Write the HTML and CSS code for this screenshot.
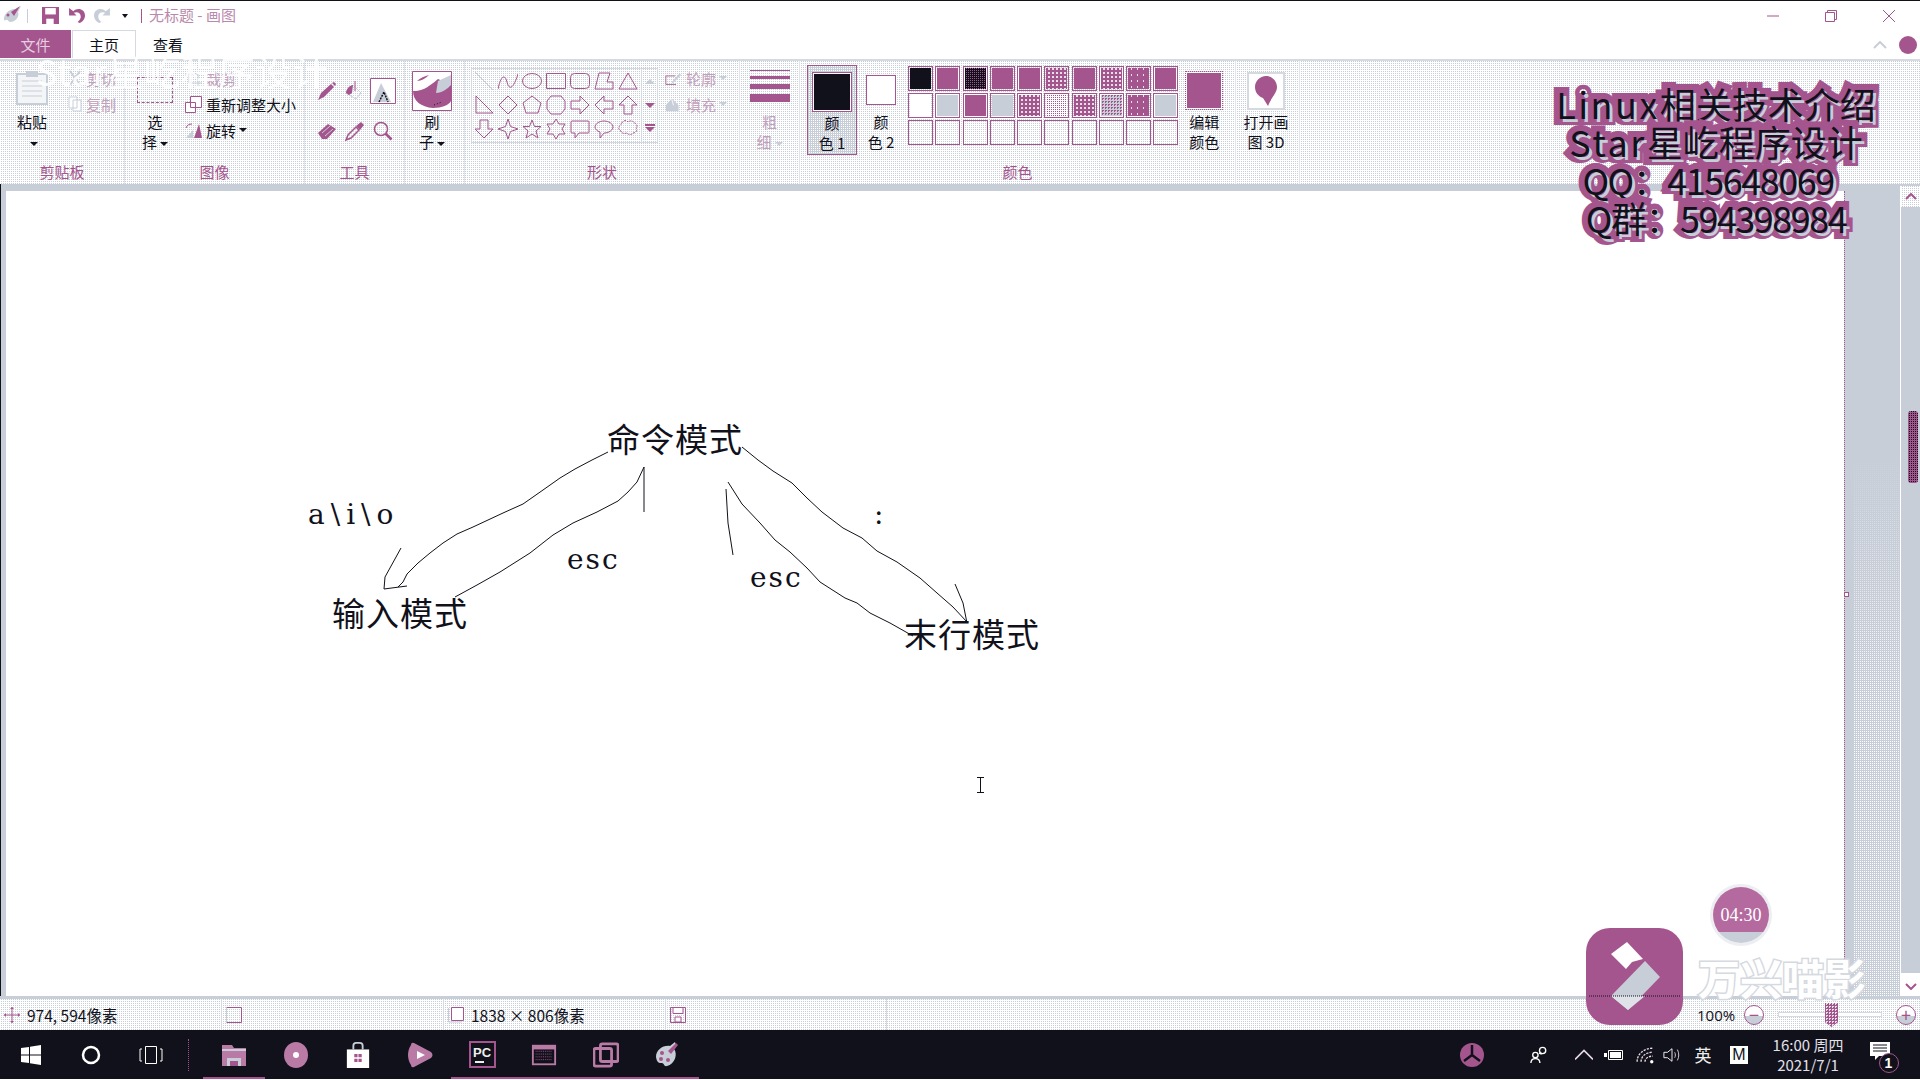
FILE: index.html
```html
<!DOCTYPE html>
<html lang="zh">
<head>
    <meta charset="UTF-8">
    <title>无标题 - 画图</title>
    <link rel="stylesheet" href="styles.css">
</head>
<body>
<div class="app">

    <div class="titlebar">
        <svg class="ti" viewBox="0 0 20 20"><path d="M2 14C1 8 8 2 14 3l5-3-3 6c2 5-3 10-8 10-2 0-2-3-4-2-1 0-1 1-2 0z" fill="#c8ced8"/><path d="M9 6l9-6-6 10z" fill="#a5558e"/><circle cx="6" cy="9" r="1.5" fill="#a5558e"/></svg>
        <span class="qa-sep"></span>
        <svg class="ti save" viewBox="0 0 16 16"><path d="M0 0h16v16H0z" fill="#a5558e"/><path d="M3 1h10v6H3z" fill="#fff"/><path d="M4 11h7v5H4z" fill="#fff"/></svg>
        <svg class="ti" viewBox="0 0 16 16"><path d="M1 1v7h7L5.5 5.5C8 4 12 5 12 9c0 2-1 4-3 5l2 1c3-1 5-4 5-7 0-6-7-8-11-4z" fill="#a5558e"/></svg>
        <svg class="ti" viewBox="0 0 16 16"><path d="M15 1v7H8l2.5-2.500C8 4 4 5 4 9c0 2 1 4 3 5l-2 1C2 14 0 11 0 8c0-6 7-8 11-4z" fill="#c8ced8"/></svg>
        <span class="qa-caret"></span>
        <span class="qa-sep second"></span>
        <span class="doc-title">无标题 - 画图</span>
        <div class="win-buttons">
            <svg viewBox="0 0 14 14"><path d="M1 7h12" stroke="#a5558e" fill="none"/></svg>
            <svg viewBox="0 0 14 14"><path d="M1.5 3.5h9v9h-9zM3.5 3.5v-2h9v9h-2" stroke="#a5558e" fill="none"/></svg>
            <svg viewBox="0 0 14 14"><path d="M1 1l12 12M13 1L1 13" stroke="#a5558e" fill="none"/></svg>
        </div>
    </div>

    <div class="tabs">
        <div class="tab tab-file">文件</div>
        <div class="tab tab-on">主页</div>
        <div class="tab">查看</div>
        <div class="tabs-right">
            <svg class="chev" viewBox="0 0 14 8"><path d="M1 7l6-6 6 6" stroke="#c8ced8" stroke-width="2" fill="none"/></svg>
            <span class="help"></span>
        </div>
    </div>

    <div class="ribbon">
        <div class="group g-clip">
            <div class="group-body">
                <div class="bigcol col-paste">
                    <div class="slot">
                        <svg width="32" height="34" viewBox="0 0 32 34"><path d="M1 3h30v30H1z" fill="#f4f5f7" stroke="#c8ced8" stroke-width="2"/><path d="M10 0h12v6H10z" fill="#c8ced8"/><path d="M6 10h20M6 15h20M6 20h20M6 25h20" stroke="#c8ced8"/></svg>
                    </div>
                    <div class="cap">粘贴</div>
                    <div class="cap"><span class="caret"></span></div>
                </div>
                <div class="smallcol">
                    <div class="row off"><svg class="si" viewBox="0 0 14 16"><path d="M2 1l10 14M12 1L2 15" stroke="#c8ced8" stroke-width="2" fill="none"/></svg>剪切</div>
                    <div class="row off"><svg class="si" viewBox="0 0 14 16"><path d="M1 1h8v11H1zM5 4h8v11H5z" stroke="#c8ced8" fill="#fff"/></svg>复制</div>
                </div>
            </div>
            <div class="group-label">剪贴板</div>
        </div>

        <div class="group g-image">
            <div class="group-body">
                <div class="bigcol col-select">
                    <div class="slot"><span class="dash-box"></span></div>
                    <div class="cap">选</div>
                    <div class="cap">择<span class="caret"></span></div>
                </div>
                <div class="smallcol">
                    <div class="row off"><svg class="si wide" viewBox="0 0 17 17"><path d="M4 0v13h13M0 4h13v13" stroke="#c8ced8" fill="none"/></svg>裁剪</div>
                    <div class="row"><svg class="si wide" viewBox="0 0 17 17"><path d="M5.5.5h11v11h-11zM.5 6.5h10v10H.5z" stroke="#a5558e" fill="#fff"/></svg>重新调整大小</div>
                    <div class="row"><svg class="si wide" viewBox="0 0 17 17"><path d="M1 16L8 8v8z" fill="#c8ced8"/><path d="M9 16l5-14 3 14z" fill="#a5558e"/><path d="M1 6c1-3 3-4 6-4" stroke="#a5558e" fill="none"/></svg>旋转<span class="caret"></span></div>
                </div>
            </div>
            <div class="group-label">图像</div>
        </div>

        <div class="group g-tools">
            <div class="group-body">
                <div class="tool-grid">
                    <svg viewBox="0 0 20 20"><path d="M1 19l3-7L14 3l3 3-10 10z" fill="#a5558e"/><path d="M15 2l2-1 2 2-1 2z" fill="#a5558e"/></svg>
                    <svg viewBox="0 0 20 20"><path d="M1 12l7-8 8 8-5 6z" fill="none" stroke="#c8ced8"/><path d="M1 12c0-4 4-8 7-8l-1 8-3 2z" fill="#a5558e"/><path d="M10 0v10" stroke="#a5558e"/></svg>
                    <svg viewBox="0 0 26 26"><path d="M.5.5h25v25H.5z" fill="#fff" stroke="#a5558e"/><path d="M3 24L11 5l10 19z" fill="#c8ced8"/><path d="M9 24l5-10 4 10" fill="none" stroke="#10111a" stroke-width="1.5" stroke-dasharray="2 1"/></svg>
                    <svg viewBox="0 0 20 20"><path d="M1 12L11 3l8 5-9 10H5z" fill="#a5558e"/><path d="M5 12l8-7M8 15l8-7" stroke="#c8ced8"/></svg>
                    <svg viewBox="0 0 20 20"><path d="M1 19l2-5 8-8 3 3-8 8z" fill="none" stroke="#a5558e" stroke-width="1.5"/><path d="M11 5l5-4 3 3-4 5z" fill="#a5558e"/></svg>
                    <svg viewBox="0 0 20 20"><circle cx="8" cy="8" r="6.5" fill="none" stroke="#a5558e" stroke-width="1.5"/><path d="M12.5 12.5l6 6" stroke="#a5558e" stroke-width="2.5"/></svg>
                </div>
            </div>
            <div class="group-label">工具</div>
        </div>

        <div class="group g-brush">
            <div class="group-body">
                <div class="bigcol col-brush">
                    <div class="slot">
                        <svg width="40" height="40" viewBox="0 0 40 40"><path d="M.5.5h39v39H.5z" fill="#fff" stroke="#a5558e"/><path d="M1 20c0 10 8 16 20 17 9 0 16-3 18-7V14L26 8C14 18 10 20 1 20z" fill="#a5558e"/><path d="M24 22c6 0 11-4 15-8V4L26 10z" fill="#c8ced8"/><path d="M5 10c3-3 8-5 12-6-3 3-8 6-12 6z" fill="#a5558e"/><path d="M22 34l8-3" stroke="#10111a" stroke-dasharray="1 2"/></svg>
                    </div>
                    <div class="cap">刷</div>
                    <div class="cap">子<span class="caret"></span></div>
                </div>
            </div>
            <div class="group-label">&nbsp;</div>
        </div>

        <div class="group g-shapes">
            <div class="group-body">
                <div class="gallery">
                    <svg viewBox="0 0 20 20"><path d="M1 1l18 18" stroke="#c8ced8"/></svg>
                    <svg viewBox="0 0 20 20"><path d="M0 18C3 4 7 3 9 11s6 8 11-8"/></svg>
                    <svg viewBox="0 0 20 20"><ellipse cx="10" cy="10" rx="9.5" ry="7.5"/></svg>
                    <svg viewBox="0 0 20 20"><path d="M.5 2.5h19v15H.5z"/></svg>
                    <svg viewBox="0 0 20 20"><rect x=".5" y="2.5" width="19" height="15" rx="4"/></svg>
                    <svg viewBox="0 0 20 20"><path d="M1 18L5 2h11l-3 9h6v7z"/></svg>
                    <svg viewBox="0 0 20 20"><path d="M10 2l9 16H1z"/></svg>
                    <svg viewBox="0 0 20 20"><path d="M2 1v17h17z"/></svg>
                    <svg viewBox="0 0 20 20"><path d="M10 1l9 9-9 9-9-9z"/></svg>
                    <svg viewBox="0 0 20 20"><path d="M10 1l9 7-3 10H4L1 8z"/></svg>
                    <svg viewBox="0 0 20 20"><path d="M5 1h10l4 5v8l-4 5H5l-4-5V6z"/></svg>
                    <svg viewBox="0 0 20 20"><path d="M1 6h9V1l9 9-9 9v-5H1z"/></svg>
                    <svg viewBox="0 0 20 20"><path d="M19 6h-9V1l-9 9 9 9v-5h9z"/></svg>
                    <svg viewBox="0 0 20 20"><path d="M6 19v-9H1l9-9 9 9h-5v9z"/></svg>
                    <svg viewBox="0 0 20 20"><path d="M6 1v9H1l9 9 9-9h-5V1z"/></svg>
                    <svg viewBox="0 0 20 20"><path d="M10 0l2.500 7.500L20 10l-7.500 2.500L10 20l-2.500-7.500L0 10l7.500-2.500z"/></svg>
                    <svg viewBox="0 0 20 20"><path d="M10 1l2.500 6.500H19l-5 4.500 2 7-6-4-6 4 2-7-5-4.500h6.500z"/></svg>
                    <svg viewBox="0 0 20 20"><path d="M10 0l3 5h6l-3 5 3 5h-6l-3 5-3-5H1l3-5-3-5h6z"/></svg>
                    <svg viewBox="0 0 20 20"><path d="M2 2h16q1 0 1 1v10q0 1-1 1H9l-4 5v-5H2q-1 0-1-1V3q0-1 1-1z"/></svg>
                    <svg viewBox="0 0 20 20"><path d="M10 2c5 0 9 3 9 6s-4 6-9 6l-4 5v-6c-3-1-5-3-5-5 0-3 4-6 9-6z"/></svg>
                    <svg viewBox="0 0 20 20"><path d="M4 4c1-3 5-3 6-1 2-2 6-1 6 1 3 0 4 4 2 5 2 2 0 5-3 5-1 2-5 2-6 0-3 1-6 0-6-2-3-1-3-5 0-6 0-1 0-2 1-2z" stroke-dasharray="2 1"/></svg>
                </div>
                <div class="gallery-scroll">
                    <span class="tri off-tri"></span>
                    <span class="tri"></span>
                    <span class="tri more"></span>
                </div>
                <div class="smallcol shape-opts">
                    <div class="row off"><svg class="si wide" viewBox="0 0 20 16"><path d="M1 5h11M1 5v10h12" stroke="#a5558e" fill="none"/><path d="M8 12l9-10 2 2-10 10z" fill="#c8ced8"/></svg>轮廓<span class="caret pale"></span></div>
                    <div class="row off"><svg class="si wide" viewBox="0 0 20 16"><path d="M1 16V9l7-8 8 8v7z" fill="#c8ced8"/><path d="M8 2l2 7" stroke="#fff"/></svg>填充<span class="caret pale"></span></div>
                </div>
            </div>
            <div class="group-label">形状</div>
        </div>

        <div class="group g-size">
            <div class="group-body">
                <div class="bigcol col-size">
                    <div class="slot lines">
                        <span class="ln l1"></span><span class="ln l2"></span><span class="ln l3"></span><span class="ln l4"></span>
                    </div>
                    <div class="cap off">粗</div>
                    <div class="cap off">细<span class="caret pale"></span></div>
                </div>
            </div>
            <div class="group-label">&nbsp;</div>
        </div>

        <div class="group g-colors">
            <div class="group-body">
                <div class="bigcol color-one">
                    <div class="slot"><span class="big-swatch black"></span></div>
                    <div class="cap">颜</div>
                    <div class="cap">色 1</div>
                </div>
                <div class="bigcol color-two">
                    <div class="slot"><span class="big-swatch white"></span></div>
                    <div class="cap">颜</div>
                    <div class="cap">色 2</div>
                </div>
                <div class="palette">
                    <span class="sw"><i class="black"></i></span>
                    <span class="sw"><i class="mag"></i></span>
                    <span class="sw"><i class="dark-dots"></i></span>
                    <span class="sw"><i class="mag"></i></span>
                    <span class="sw"><i class="mag"></i></span>
                    <span class="sw"><i class="dots"></i></span>
                    <span class="sw"><i class="mag"></i></span>
                    <span class="sw"><i class="dots"></i></span>
                    <span class="sw"><i class="sparse"></i></span>
                    <span class="sw"><i class="mag"></i></span>

                    <span class="sw"><i class="white"></i></span>
                    <span class="sw"><i class="grey"></i></span>
                    <span class="sw"><i class="mag"></i></span>
                    <span class="sw"><i class="grey"></i></span>
                    <span class="sw"><i class="dots"></i></span>
                    <span class="sw"><i class="light-dots"></i></span>
                    <span class="sw"><i class="dots"></i></span>
                    <span class="sw"><i class="grey-dots"></i></span>
                    <span class="sw"><i class="sparse"></i></span>
                    <span class="sw"><i class="grey"></i></span>

                    <span class="sw"></span><span class="sw"></span><span class="sw"></span><span class="sw"></span><span class="sw"></span>
                    <span class="sw"></span><span class="sw"></span><span class="sw"></span><span class="sw"></span><span class="sw"></span>
                </div>
                <div class="bigcol col-edit">
                    <div class="slot"><span class="edit-swatch"></span></div>
                    <div class="cap">编辑</div>
                    <div class="cap">颜色</div>
                </div>
            </div>
            <div class="group-label">颜色</div>
        </div>

        <div class="group g-3d">
            <div class="group-body">
                <div class="bigcol col-3d">
                    <div class="slot">
                        <span class="box-3d"><svg width="22" height="30" viewBox="0 0 22 30"><path d="M11 0c6 0 11 5 11 11 0 6-5 9-9 19L8 22C3 20 0 16 0 11 0 5 5 0 11 0z" fill="#a5558e"/></svg></span>
                    </div>
                    <div class="cap">打开画</div>
                    <div class="cap">图 3D</div>
                </div>
            </div>
            <div class="group-label">&nbsp;</div>
        </div>
    </div>

    <div class="workspace">
        <div class="canvas">
            <svg class="ink" width="1838" height="806" viewBox="6 191 1838 806">
                <path d="M608 452L592 460 575 469 560 478 543 490 523 504 503 513 473 527 457 534 443 543 430 553 418 563 407 574 403 582 398 587"/>
                <path d="M401 548L385 577 384 589 407 586"/>
                <path d="M644 467L637 482 628 492 618 501 597 512 573 523 553 535 530 553 500 572 477 585 455 597"/>
                <path d="M644 467V512"/>
                <path d="M742 447L758 460 773 471 792 483 807 498 822 512 843 528 862 538 877 551 897 562 920 578 937 593 953 607 967 622"/>
                <path d="M955 584L963 603 967 623"/>
                <path d="M728 482L742 504 760 523 775 540 790 552 807 568 820 582 845 598 857 603 870 613 890 623 913 636"/>
                <path d="M726 489L728 523 733 555"/>
            </svg>
            <span class="note note-cmd">命令模式</span>
            <span class="note note-input">输入模式</span>
            <span class="note note-last">末行模式</span>
            <span class="note latin note-aio">a\i\o</span>
            <span class="note latin note-esc1">esc</span>
            <span class="note latin note-esc2">esc</span>
            <span class="note latin note-colon">:</span>
            <svg class="ibeam" width="9" height="16" viewBox="0 0 9 16"><path d="M1 .5h7M4.5 .5v15M1 15.500h7" stroke="#10111a" fill="none"/></svg>
            <span class="handle handle-r"></span>
            <span class="handle handle-b"></span>
        </div>
        <div class="gutter"><div class="gutter-dots"></div></div>
        <div class="scrollbar">
            <div class="sb-btn"><svg width="12" height="7" viewBox="0 0 12 7"><path d="M1 6l5-5 5 5" stroke="#a5558e" stroke-width="2" fill="none"/></svg></div>
            <div class="sb-track"><span class="sb-thumb"></span></div>
            <div class="sb-btn down"><svg width="12" height="7" viewBox="0 0 12 7"><path d="M1 1l5 5 5-5" stroke="#a5558e" stroke-width="2" fill="none"/></svg></div>
        </div>
    </div>

    <div class="statusbar">
        <div class="st-cell"><svg class="st-ic" viewBox="0 0 16 16"><path d="M8 0v16M0 8h16" stroke="#a5558e" fill="none"/><path d="M8 0l-2 2h4zM8 16l-2-2h4zM0 8l2-2v4zM16 8l-2-2v4z" fill="#a5558e"/></svg>974, 594像素</div>
        <div class="st-cell"><svg class="st-ic" viewBox="0 0 16 16"><path d="M.5.5h15M15.5.5v15M.5 15.5h15" stroke="#a5558e" fill="none"/><path d="M.5.5v15" stroke="#c8ced8"/></svg></div>
        <div class="st-cell"><svg class="st-ic" viewBox="0 0 16 16"><path d="M3.5.5h12v13h-12z" stroke="#a5558e" fill="#fff"/><path d="M.5 1v14h13" stroke="#c8ced8" fill="none"/></svg>1838 × 806像素</div>
        <div class="st-cell last"><svg class="st-ic" viewBox="0 0 16 16"><path d="M.5.5h15v15H.5z" stroke="#a5558e" fill="none"/><path d="M3 .5h10v6H3zM5 10h6v5H5z" stroke="#a5558e" fill="#fff"/></svg></div>
        <div class="zoom">
            <span class="zoom-num">100%</span>
            <span class="zoom-btn">−</span>
            <span class="zoom-track"><span class="zoom-thumb"></span></span>
            <span class="zoom-btn">+</span>
        </div>
    </div>

    <div class="taskbar">
        <div class="tb-cell">
            <svg class="tb-ic win" viewBox="0 0 20 20"><path d="M0 3l8-1v7.5H0zM9 1.800L20 0v9.5H9zM0 10.5h8V18l-8-1zM9 10.5h11V20L9 18.200z" fill="#fff"/></svg>
        </div>
        <div class="tb-cell narrow">
            <svg class="tb-ic cortana" viewBox="0 0 20 20"><circle cx="10" cy="10" r="8" fill="none" stroke="#fff" stroke-width="2.5"/></svg>
        </div>
        <div class="tb-cell">
            <svg class="tb-ic view" viewBox="0 0 24 20"><path d="M6.5 1.5h11v17h-11z" stroke="#fff" fill="none"/><path d="M3 4H1v12h2M21 4h2v12h-2" stroke="#fff" fill="none"/></svg>
        </div>
        <span class="tb-sep"></span>
        <div class="tb-cell on">
            <svg class="tb-ic" viewBox="0 0 26 26"><path d="M1 3h10l2 3h12v18H1z" fill="#b97aa6"/><path d="M1 8h24" stroke="#c8ced8" stroke-width="2"/><path d="M6 24v-8h14v8" fill="#c8ced8"/><path d="M9 24v-5h8v5" fill="#a5558e"/></svg>
        </div>
        <div class="tb-cell">
            <svg class="tb-ic" viewBox="0 0 26 26"><ellipse cx="13" cy="13" rx="12" ry="13" fill="#b97aa6"/><circle cx="13" cy="13" r="3" fill="#fff"/></svg>
        </div>
        <div class="tb-cell">
            <svg class="tb-ic" viewBox="0 0 26 28"><path d="M1 8h24v20H1z" fill="#fff"/><path d="M8 8V4q0-3 3-3h4q3 0 3 3v4" fill="none" stroke="#c8ced8" stroke-width="2"/><path d="M9 13h3.5v3.500H9zM13.5 13H17v3.500h-3.500zM9 18h3.500v3.500H9zM13.5 18H17v3.500h-3.500z" fill="#a5558e"/></svg>
        </div>
        <div class="tb-cell">
            <svg class="tb-ic" viewBox="0 0 26 26"><path d="M4 3q0-3 3-2l17 9q3 3 0 6L7 25q-3 1-3-2C0 17 0 9 4 3z" fill="#b97aa6"/><path d="M10 9l8 4-8 4z" fill="#fff"/></svg>
        </div>
        <div class="tb-cell on">
            <span class="pc-logo">PC<i></i></span>
        </div>
        <div class="tb-cell on">
            <svg class="tb-ic" viewBox="0 0 28 24"><path d="M1 1h26v22H1z" fill="#b97aa6"/><path d="M3 6h22v15H3z" fill="#10111a"/><path d="M5 8h18M5 11h18M5 14h18M5 17h18" stroke="#a5558e" stroke-dasharray="1 1"/></svg>
        </div>
        <div class="tb-cell on">
            <svg class="tb-ic" viewBox="0 0 28 28"><path d="M10 2h15q2 0 2 2v15q0 2-2 2H10q-2 0-2-2V4q0-2 2-2z" fill="none" stroke="#b97aa6" stroke-width="3"/><path d="M3 7h15q2 0 2 2v15q0 2-2 2H3q-2 0-2-2V9q0-2 2-2z" fill="none" stroke="#b97aa6" stroke-width="3"/></svg>
        </div>
        <div class="tb-cell on">
            <svg class="tb-ic" viewBox="0 0 26 26"><path d="M1 15C1 8 8 3 15 4l5-4 1 3-2 4c4 5 1 15-7 17-3 1-3-3-5-3-3 0-5 0-6-6z" fill="#c8ced8"/><path d="M13 9l8-8 2 2-7 9z" fill="#a5558e"/><circle cx="7" cy="11" r="2" fill="#a5558e"/><circle cx="6" cy="17" r="2" fill="#a5558e"/><circle cx="13" cy="18" r="2" fill="#a5558e"/></svg>
        </div>

        <div class="tray">
            <svg class="tr-logo" viewBox="0 0 24 24"><circle cx="12" cy="12" r="12" fill="#a5558e"/><path d="M12 12V2M12 12l-8 6M12 12l8 6" stroke="#10111a" stroke-width="2.5"/></svg>
            <svg class="tr-ic people" viewBox="0 0 20 20"><circle cx="14" cy="5" r="3.5" fill="none" stroke="#fff" stroke-width="1.5"/><circle cx="6" cy="10" r="3" fill="none" stroke="#fff" stroke-width="1.5"/><path d="M1 19c0-3 2-5 5-5s5 2 5 5M10 8l3 1" fill="none" stroke="#fff" stroke-width="1.5"/></svg>
            <svg class="tr-ic" viewBox="0 0 16 16"><path d="M0 12l8-8 8 8" fill="none" stroke="#e8d8e4" stroke-width="1.5"/></svg>
            <svg class="tr-ic batt" viewBox="0 0 20 12"><path d="M4.5 1.5h14v9h-14z" fill="none" stroke="#fff"/><path d="M6 3h11v6H6z" fill="#fff"/><path d="M0 4h3v4H0z" fill="#fff"/></svg>
            <svg class="tr-ic" viewBox="0 0 16 16"><path d="M1 14C1 7 7 2 15 2M4.5 14C4.5 9 9 5.5 15 5.5M8 14c0-3 3-5 7-5" fill="none" stroke="#e8d8e4" stroke-width="1.200" stroke-dasharray="2 1"/><circle cx="14" cy="14" r="1.5" fill="#fff"/></svg>
            <svg class="tr-ic" viewBox="0 0 20 16"><path d="M1 5h4l5-4v14l-5-4H1z" fill="none" stroke="#fff"/><path d="M13 5c1 2 1 4 0 6M16 2c2 4 2 8 0 12" fill="none" stroke="#e8d8e4"/></svg>
            <span class="tr-text">英</span>
            <span class="tr-m">M</span>
            <div class="tr-clock"><div>16:00 周四</div><div>2021/7/1</div></div>
            <div class="tr-notice">
                <svg class="tr-msg" viewBox="0 0 20 18"><path d="M0 0h20v14H9l-4 4v-4H0z" fill="#fff"/><path d="M3 3h14M3 6h14M3 9h14" stroke="#10111a"/></svg>
                <span class="tr-badge">1</span>
            </div>
        </div>
    </div>

    <!-- 录屏软件盖在上面的水印 -->
    <div class="ghost-title">Star星屹程序设计</div>
    <div class="banner">
        <div><span class="wide-latin">Linux</span>相关技术介绍</div>
        <div><span class="wide-latin">Star</span>星屹程序设计</div>
        <div class="digits qq">QQ：415648069</div>
        <div class="digits">Q群：594398984</div>
    </div>
    <div class="timer">04:30</div>
    <svg class="film-logo" viewBox="0 0 97 97">
        <rect width="97" height="97" rx="24" fill="#a5558e"/>
        <path d="M41 14l16 17-11 3-6 7-15-15z" fill="#fff"/>
        <path d="M59 33l15 16-32 33-17-14z" fill="#c8ced8"/>
        <path d="M25 68h34L42 82z" fill="#dfe2e8"/>
        <path d="M3 68h91" stroke="#10111a" stroke-dasharray="1 1"/>
    </svg>
    <div class="film-name">万兴喵影</div>
</div>
</body>
</html>
```

FILE: styles.css
```css
*{
    box-sizing: border-box;
}
html, body{
    margin: 0;
    padding: 0;
}
body{
    font-family: "Noto Sans CJK SC", "Noto Sans", sans-serif;
    font-size: 15px;
    color: #10111a;
    background: #fff;
}
.app{
    position: relative;
    width: 1920px;
    height: 1080px;
    overflow: hidden;
    display: flex;
    flex-direction: column;
}

/* title bar */
.titlebar{
    height: 30px;
    border-top: 1px solid #10111a;
    display: flex;
    align-items: center;
    padding-left: 2px;
    background: #fff;
}
.ti{
    width: 17px;
    height: 17px;
    margin-right: 9px;
}
.titlebar .ti:first-child{
    width: 20px;
    height: 20px;
    margin-right: 5px;
}
.qa-sep{
    width: 1px;
    height: 14px;
    background: #c8ced8;
    margin-right: 14px;
}
.qa-sep.second{
    background: #a5558e;
    margin: 0 7px 0 13px;
}
.qa-caret{
    width: 0;
    height: 0;
    border: 3px solid transparent;
    border-top: 4px solid #10111a;
    margin: 4px 0 0 2px;
}
.doc-title{
    font-size: 15px;
    color: #b98aad;
    padding-bottom: 2px;
}
.win-buttons{
    margin-left: auto;
    display: flex;
    width: 154px;
    padding-right: 24px;
    justify-content: space-between;
}
.win-buttons svg{
    width: 14px;
    height: 14px;
}

/* tabs */
.tabs{
    height: 31px;
    display: flex;
    background: #fff;
    border-bottom: 2px solid #d5d9e0;
    align-items: flex-start;
}
.tab{
    width: 64px;
    height: 28px;
    line-height: 30px;
    text-align: center;
    font-size: 15px;
}
.tab-file{
    width: 71px;
    color: #e6cfe0;
    background: #a5558e;
}
.tab-on{
    border: 1px solid #d5d9e0;
    border-bottom: 0;
    line-height: 28px;
    margin-left: 1px;
}
.tabs-right{
    margin-left: auto;
    display: flex;
    align-items: center;
    height: 28px;
    padding: 2px 3px 0 0;
}
.chev{
    width: 14px;
    height: 8px;
    margin-right: 12px;
}
.help{
    width: 18px;
    height: 18px;
    border-radius: 50%;
    background: #a5558e;
}

/* ribbon */
.ribbon{
    height: 123px;
    display: flex;
    background: conic-gradient(#c8ced8 25%, #fff 0) 0 0 / 2px 2px;
}
.group{
    display: flex;
    flex-direction: column;
    border-right: 1px solid #e1e4e9;
}
.group-body{
    height: 99px;
    display: flex;
}
.group-label{
    height: 24px;
    line-height: 24px;
    text-align: center;
    color: #a5558e;
    font-size: 15px;
}
.g-clip{ width: 125px; }
.g-clip .group-body{ padding-left: 10px; }
.g-image{ width: 180px; }
.g-tools{ width: 100px; }
.g-brush{ width: 60px; }
.g-shapes{ width: 275px; }
.g-size{ width: 60px; }
.g-colors{ width: 436px; }
.g-3d{ width: 64px; }

.bigcol{
    display: flex;
    flex-direction: column;
    align-items: center;
    padding-top: 7px;
}
.slot{
    height: 44px;
    display: flex;
    align-items: flex-start;
    justify-content: center;
    padding-top: 3px;
}
.cap{
    height: 20px;
    line-height: 19px;
    font-size: 15px;
    text-align: center;
    white-space: nowrap;
}
.off{
    color: #c2a0bb;
}
.caret{
    display: inline-block;
    width: 0;
    height: 0;
    border: 4px solid transparent;
    border-top: 4px solid #10111a;
    border-bottom: 0;
    margin-left: 3px;
    vertical-align: middle;
}
.caret.pale{
    border-top-color: #c8ced8;
}
.col-paste{ width: 44px; }
.col-select{ width: 60px; }
.col-brush{ width: 54px; }
.col-size{ width: 60px; }
.col-edit{ width: 52px; }
.col-3d{ width: 60px; }
.dash-box{
    width: 36px;
    height: 26px;
    border: 1px dashed #a5558e;
    margin-top: 6px;
}
.smallcol{
    padding-top: 4px;
    display: flex;
    flex-direction: column;
}
.g-clip .smallcol{
    margin-left: 14px;
}
.row{
    height: 26px;
    display: flex;
    align-items: center;
    white-space: nowrap;
}
.si{
    width: 14px;
    height: 16px;
    margin-right: 4px;
}
.si.wide{
    width: 17px;
    height: 17px;
}
.tool-grid{
    display: grid;
    grid-template-columns: repeat(3, 28px);
    grid-auto-rows: 40px;
    justify-items: center;
    align-items: center;
    padding: 10px 0 0 8px;
}
.tool-grid svg{
    width: 20px;
    height: 20px;
}
.tool-grid svg:nth-child(3){
    width: 26px;
    height: 26px;
}
.gallery{
    margin: 7px 0 0 6px;
    width: 171px;
    height: 75px;
    border: 1px solid #d5d9e0;
    display: grid;
    grid-template-columns: repeat(7, 24px);
    grid-auto-rows: 24px;
    justify-items: center;
    align-items: center;
}
.gallery svg{
    width: 20px;
    height: 20px;
    fill: none;
    stroke: #a5558e;
}
.gallery-scroll{
    margin-top: 7px;
    width: 16px;
    height: 75px;
    border: 1px solid #d5d9e0;
    border-left: 0;
    display: flex;
    flex-direction: column;
    align-items: center;
    justify-content: space-around;
}
.tri{
    width: 0;
    height: 0;
    border: 5px solid transparent;
    border-top: 5px solid #a5558e;
    border-bottom: 0;
}
.tri.off-tri{
    border-top: 0;
    border-bottom: 5px solid #c8ced8;
}
.tri.more{
    position: relative;
}
.tri.more::before{
    content: "";
    position: absolute;
    left: -5px;
    top: -8px;
    width: 10px;
    height: 2px;
    background: #a5558e;
}
.shape-opts{
    margin-left: 7px;
}
.lines{
    width: 40px;
    flex-direction: column;
    align-items: stretch;
    justify-content: flex-start;
    padding-top: 2px;
}
.ln{
    background: #a5558e;
    margin-bottom: 5px;
}
.l1{ height: 1px; }
.l2{ height: 3px; }
.l3{ height: 5px; }
.l4{ height: 8px; margin-bottom: 0; }
.color-one{
    width: 50px;
    height: 90px;
    margin: 4px 0 0 7px;
    padding-top: 3px;
    border: 1px solid #a5558e;
    background: conic-gradient(#fff 25%, #c8ced8 0) 0 0 / 2px 2px;
}
.color-two{
    width: 48px;
    margin-right: 3px;
}
.big-swatch{
    display: block;
    border: 1px solid #a5558e;
}
.big-swatch.black{
    width: 40px;
    height: 40px;
    background: #10111a;
    outline: 1px solid #fff;
    outline-offset: -2px;
}
.big-swatch.white{
    width: 30px;
    height: 30px;
    background: #fff;
    margin-top: 4px;
}
.palette{
    margin-top: 5px;
    display: grid;
    grid-template-columns: repeat(10, 25px);
    grid-auto-rows: 25px;
    column-gap: 2.25px;
    row-gap: 2px;
    align-content: start;
}
.sw{
    display: block;
    padding: 1px;
    border: 1px solid #a5558e;
}
.sw i{
    display: block;
    width: 100%;
    height: 100%;
}
.black{ background: #10111a; }
.white{ background: #fff; }
.mag{ background: #a5558e; }
.grey{ background: #c8ced8; }
.dots{ background: conic-gradient(#e4e0ea 25%, #a5558e 0) 0 0 / 4px 4px; }
.sparse{ background: conic-gradient(#e4e0ea 6%, #a5558e 0) 0 0 / 6px 6px; }
.dark-dots{ background: conic-gradient(#a5558e 25%, #10111a 0) 0 0 / 2px 2px; }
.light-dots{ background: conic-gradient(#a5558e 25%, #fff 0) 0 0 / 2px 2px; }
.grey-dots{ background: conic-gradient(#a5558e 25%, #c8ced8 0) 0 0 / 3px 3px; }
.edit-swatch{
    display: block;
    width: 36px;
    height: 37px;
    background: #a5558e;
    border: 1px solid #fff;
    outline: 1px dotted #a5558e;
    margin-top: 1px;
}
.box-3d{
    width: 38px;
    height: 38px;
    border: 2px solid #d5d9e0;
    background: #fff;
    display: flex;
    align-items: center;
    justify-content: center;
    margin-top: 1px;
}

/* work area */
.workspace{
    height: 815px;
    display: flex;
    background: #c8ced8;
    padding-top: 7px;
    border-left: 1px solid #10111a;
}
.canvas{
    position: relative;
    width: 1838px;
    height: 806px;
    margin-left: 5px;
    background: #fff;
}
.ink{
    position: absolute;
    left: 0;
    top: 0;
}
.ink path{
    fill: none;
    stroke: #10111a;
    stroke-width: 1;
}
.note{
    position: absolute;
    font-family: "Liberation Serif", "Noto Sans CJK SC", serif;
    font-size: 33px;
    line-height: 40px;
    white-space: nowrap;
    letter-spacing: 1px;
}
.note.latin{
    font-family: "DejaVu Serif", serif;
    font-size: 28px;
    letter-spacing: 2px;
}
.note-cmd{ left: 601px; top: 230px; }
.note-input{ left: 326px; top: 404px; }
.note-last{ left: 898px; top: 425px; }
.note.note-aio{ left: 302px; top: 304px; letter-spacing: 6px; }
.note-esc1{ left: 561px; top: 349px; }
.note-esc2{ left: 744px; top: 367px; }
.note-colon{ left: 868px; top: 304px; }
.ibeam{
    position: absolute;
    left: 970px;
    top: 586px;
}
.handle{
    position: absolute;
    width: 5px;
    height: 5px;
    background: #fff;
    border: 1px solid #a5558e;
}
.handle-r{ right: -5px; top: 401px; }
.handle-b{ left: 917px; bottom: -5px; }
.gutter{
    width: 56px;
    border-left: 1px dotted #a5558e;
    padding: 262px 0 0 8px;
}
.gutter-dots{
    height: 548px;
    background: conic-gradient(#fff 25%, transparent 0) 0 0 / 2px 2px;
    -webkit-mask-image: linear-gradient(transparent, #000 45%);
    mask-image: linear-gradient(transparent, #000 45%);
}
.scrollbar{
    width: 20px;
    margin-top: -5px;
    border-left: 1px solid #fff;
    display: flex;
    flex-direction: column;
}
.sb-btn{
    height: 21px;
    background: conic-gradient(#c8ced8 25%, #fff 0) 0 0 / 2px 2px;
    display: flex;
    align-items: center;
    justify-content: center;
}
.sb-btn.down{
    height: 26px;
    background: #fff;
}
.sb-track{
    flex: 1;
    padding: 204px 0 0 7px;
}
.sb-thumb{
    display: block;
    width: 10px;
    height: 72px;
    border-radius: 3px;
    background: conic-gradient(#10111a 25%, #a5558e 0) 0 0 / 2px 2px;
}

/* status bar */
.statusbar{
    position: relative;
    height: 34px;
    margin-top: -3px;
    display: flex;
    background: conic-gradient(#c8ced8 25%, #fff 0) 0 0 / 2px 2px;
    border-top: 3px solid #c8ced8;
    font-size: 15.5px;
}
.st-cell{
    width: 222px;
    display: flex;
    align-items: center;
    padding-left: 4px;
    border-right: 1px solid #d5d9e0;
}
.st-cell.last{
    width: 221px;
}
.st-ic{
    width: 16px;
    height: 16px;
    margin-right: 7px;
}
.zoom{
    margin-left: auto;
    display: flex;
    align-items: center;
    padding-right: 4px;
}
.zoom-num{
    width: 47px;
    font-family: "Open Sans", sans-serif;
    font-size: 15px;
}
.zoom-btn{
    width: 20px;
    height: 20px;
    border: 1px solid #a5558e;
    border-radius: 50%;
    background: linear-gradient(#fff 55%, #c8ced8 0);
    text-align: center;
    line-height: 17px;
    font-size: 18px;
    color: #a5558e;
}
.zoom-track{
    position: relative;
    width: 104px;
    height: 5px;
    margin: 0 14px;
    background: #fff;
    border: 1px solid #d5d9e0;
}
.zoom-thumb{
    position: absolute;
    left: 46px;
    top: -10px;
    width: 13px;
    height: 24px;
    background: conic-gradient(#e4e0ea 25%, #a5558e 0) 0 0 / 3px 3px;
    clip-path: polygon(0 0, 100% 0, 100% 80%, 50% 100%, 0 80%);
}

/* taskbar */
.taskbar{
    height: 49px;
    display: flex;
    background: #10111a;
    color: #eee;
}
.tb-cell{
    width: 62px;
    height: 49px;
    display: flex;
    align-items: center;
    justify-content: center;
    border-bottom: 2px solid transparent;
    padding-top: 2px;
}
.tb-cell.narrow{
    width: 58px;
}
.tb-cell.on{
    border-bottom-color: #a5558e;
}
.tb-sep{
    width: 1px;
    height: 32px;
    margin: 9px 14px 0 6px;
    border-left: 1px dotted #a5558e;
}
.tb-ic{
    width: 26px;
    height: 26px;
}
.tb-ic.win{
    width: 20px;
    height: 20px;
}
.tb-ic.cortana{
    width: 20px;
    height: 20px;
}
.tb-ic.view{
    width: 24px;
    height: 20px;
}
.pc-logo{
    position: relative;
    width: 27px;
    height: 27px;
    background: #10111a;
    border: 2px solid #a5558e;
    color: #eee;
    font-family: "Liberation Sans", sans-serif;
    font-weight: 700;
    font-size: 13px;
    line-height: 19px;
    text-align: center;
}
.pc-logo i{
    position: absolute;
    left: 4px;
    bottom: 3px;
    width: 9px;
    height: 2px;
    background: #eee;
}
.tray{
    margin-left: auto;
    display: grid;
    grid-template-columns: 48px 80px 16px 44px 18px 36px 26px 46px 92px 52px;
    justify-items: center;
    align-items: center;
    padding-right: 14px;
    height: 49px;
}
.tr-logo{
    width: 24px;
    height: 24px;
}
.tr-ic{
    width: 18px;
    height: 18px;
}
.tr-ic.people{
    margin-left: 6px;
}
.tr-ic.batt{
    width: 20px;
    height: 12px;
}
.tr-text{
    font-size: 17px;
    color: #eee;
}
.tr-m{
    width: 18px;
    height: 18px;
    background: #fff;
    color: #10111a;
    font-family: "Liberation Sans", sans-serif;
    font-size: 16px;
    line-height: 18px;
    text-align: center;
}
.tr-clock{
    text-align: center;
    font-size: 15px;
    line-height: 20px;
    white-space: nowrap;
    color: #e4e0ea;
}
.tr-notice{
    position: relative;
    width: 30px;
    height: 30px;
    margin-left: 5px;
}
.tr-msg{
    position: absolute;
    left: 2px;
    top: 2px;
    width: 20px;
    height: 18px;
}
.tr-badge{
    position: absolute;
    left: 11px;
    top: 13px;
    width: 20px;
    height: 20px;
    border: 1px solid #a5558e;
    border-radius: 50%;
    background: #10111a;
    color: #fff;
    font-family: "Liberation Sans", sans-serif;
    font-weight: 700;
    font-size: 14px;
    line-height: 18px;
    text-align: center;
}

/* overlays from the screen recorder */
.ghost-title{
    position: absolute;
    left: 36px;
    top: 50px;
    font-size: 36px;
    line-height: 40px;
    letter-spacing: 1px;
    color: #fff;
    opacity: 0.9;
    white-space: nowrap;
}
.banner{
    position: absolute;
    left: 1500px;
    top: 84px;
    width: 432px;
    text-align: center;
    font-size: 36px;
    line-height: 38px;
    color: #10111a;
    -webkit-text-stroke: 12px #a5558e;
    paint-order: stroke fill;
    text-shadow: 3px 3px 0 #c8ced8;
    white-space: nowrap;
}
.wide-latin{
    letter-spacing: 2.5px;
}
.banner .digits{
    letter-spacing: -1.5px;
}
.banner .qq{
    padding-right: 16px;
}
.timer{
    position: absolute;
    left: 1713px;
    top: 887px;
    width: 56px;
    height: 56px;
    border-radius: 50%;
    background: linear-gradient(#b56a9f 80%, #c8ced8 0);
    color: #fff;
    font-family: "Liberation Serif", serif;
    font-size: 18px;
    line-height: 56px;
    text-align: center;
    box-shadow: 0 0 0 3px #eceef2;
}
.film-logo{
    position: absolute;
    left: 1586px;
    top: 928px;
    width: 97px;
    height: 97px;
}
.film-name{
    position: absolute;
    left: 1698px;
    top: 952px;
    font-size: 42px;
    line-height: 50px;
    font-weight: 700;
    color: #fff;
    -webkit-text-stroke: 3px #d5d9e0;
    paint-order: stroke fill;
    white-space: nowrap;
}
```
